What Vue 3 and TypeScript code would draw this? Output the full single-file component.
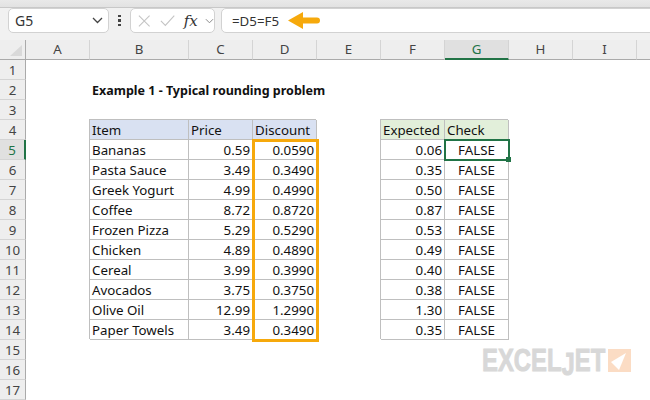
<script setup lang="ts">
type Cell = { text: string; cls: string };

// the tenth column runs off the window, its letter isn't visible
const columns = ["A", "B", "C", "D", "E", "F", "G", "H", "I", ""];

const items: [string, string, string, string][] = [
  ["Bananas", "0.59", "0.0590", "0.06"],
  ["Pasta Sauce", "3.49", "0.3490", "0.35"],
  ["Greek Yogurt", "4.99", "0.4990", "0.50"],
  ["Coffee", "8.72", "0.8720", "0.87"],
  ["Frozen Pizza", "5.29", "0.5290", "0.53"],
  ["Chicken", "4.89", "0.4890", "0.49"],
  ["Cereal", "3.99", "0.3990", "0.40"],
  ["Avocados", "3.75", "0.3750", "0.38"],
  ["Olive Oil", "12.99", "1.2990", "1.30"],
  ["Paper Towels", "3.49", "0.3490", "0.35"],
];

const blank = (): Cell => ({ text: "", cls: "" });

// every sheet row has ten cells, A to J
const buildRow = (n: number): Cell[] => {
  const row = columns.map(blank);
  if (n === 2) {
    row[1] = { text: "Example 1 - Typical rounding problem", cls: "title" };
  }
  if (n === 4) {
    row[1] = { text: "Item", cls: "boxed blue" };
    row[2] = { text: "Price", cls: "boxed blue" };
    row[3] = { text: "Discount", cls: "boxed blue" };
    row[5] = { text: "Expected", cls: "boxed green" };
    row[6] = { text: "Check", cls: "boxed green" };
  }
  if (n >= 5 && n <= 14) {
    const [name, price, discount, expected] = items[n - 5];
    row[1] = { text: name, cls: "boxed" };
    row[2] = { text: price, cls: "boxed num" };
    row[3] = { text: discount, cls: "boxed num" };
    row[5] = { text: expected, cls: "boxed num" };
    row[6] = { text: "FALSE", cls: "boxed mid" };
  }
  return row;
};

const rows = Array.from({ length: 17 }, (_, i) => ({ n: i + 1, cells: buildRow(i + 1) }));
</script>

<template>
  <div class="app">
    <div class="top-strip"></div>
    <div class="toolbar">
      <div class="name-box">
        <span>G5</span>
        <svg width="11" height="7" viewBox="0 0 11 7"><path d="M1 1l4.500 4.500L10 1" fill="none" stroke="#444" stroke-width="1.3" /></svg>
      </div>
      <div class="dots"><i></i><i></i><i></i></div>
      <div class="fx-box">
        <svg width="14" height="14" viewBox="0 0 14 14"><path d="M1 1l12 12M13 1L1 13" fill="none" stroke="#c4c4c4" stroke-width="1.2" /></svg>
        <svg class="check" width="17" height="13" viewBox="0 0 17 13"><path d="M1 7l5 5L16 1" fill="none" stroke="#c4c4c4" stroke-width="1.2" /></svg>
        <span class="fx">fx</span>
        <svg width="10" height="6" viewBox="0 0 10 6"><path d="M1 1l4 4 4-4" fill="none" stroke="#888" stroke-width="1.1" /></svg>
      </div>
      <div class="formula">
        <span>=D5=F5</span>
        <svg width="32" height="17" viewBox="0 0 32 17"><path d="M0 8.500L15 0v5.500h14a3 3 0 0 1 0 6H15V17z" fill="#f6a90c" /></svg>
      </div>
    </div>

    <div class="sheet">
      <div class="corner">
        <svg width="26" height="20" viewBox="0 0 26 20"><path d="M22 5v11H10z" fill="#d9d9d9" /></svg>
      </div>
      <div v-for="c in columns" :key="c" class="col-head" :class="{ active: c === 'G' }">{{ c }}</div>

      <template v-for="r in rows" :key="r.n">
        <div class="row-head" :class="{ active: r.n === 5 }">{{ r.n }}</div>
        <div v-for="(cell, i) in r.cells" :key="i" class="cell" :class="cell.cls">{{ cell.text }}</div>
      </template>

      <div class="orange-box"></div>
      <div class="selection"><span class="handle"></span></div>
    </div>

    <div class="logo">
      <span class="word">EXCEL<span class="j">J</span>ET</span>
      <span class="mark">
        <svg width="23" height="23" viewBox="0 0 23 23"><path d="M18 4L3 13l8 8z" fill="#fff" /></svg>
      </span>
    </div>
  </div>
</template>

<style scoped>
.app {
  position: relative;
  width: 650px;
  height: 400px;
  overflow: hidden;
  background: #fff;
  font-family: "Noto Sans", "Open Sans", sans-serif;
  font-size: 13.3px;
  color: #111;
}

.top-strip {
  height: 8px;
  background: linear-gradient(#e9e9e9, #e2e2e2);
  border-bottom: 1px solid #c8c8c8;
  box-sizing: border-box;
}

.toolbar {
  display: flex;
  align-items: stretch;
  height: 32px;
  padding: 0 0 7px 8px;
  box-sizing: border-box;
  background: #f1f1f1;
}

.name-box,
.fx-box,
.formula {
  display: flex;
  align-items: center;
  background: #fff;
  border: 1px solid #d2d2d2;
  box-sizing: border-box;
  border-radius: 5px;
}

.name-box {
  width: 101px;
  padding: 0 5px 0 6px;
  justify-content: space-between;
  color: #333;
  font-size: 14px;
}

.dots {
  display: flex;
  flex-direction: column;
  justify-content: center;
  gap: 2px;
  width: 21px;
  align-items: center;
}

.dots i {
  width: 2.500px;
  height: 2.500px;
  background: #444;
}

.fx-box {
  width: 85px;
  padding-left: 7px;
  margin-right: 6px;
}

.check {
  margin-left: 9px;
}

.fx {
  width: 24px;
  margin-left: 9px;
  font-family: "DejaVu Serif", "Liberation Serif", serif;
  font-style: italic;
  font-size: 15px;
  color: #333;
}

.formula {
  flex: 1;
  margin-right: -6px;
  padding-left: 10px;
  gap: 9px;
  font-size: 13.3px;
  color: #333;
}

.sheet {
  position: relative;
  display: grid;
  grid-template-columns: 26px 64px 99px repeat(8, 64px);
  grid-auto-rows: 20px;
  background: #fff;
}

.corner {
  height: 20px;
  background: #eee;
  border-bottom: 1px solid #aaa;
  border-right: 1px solid #aaa;
  box-sizing: border-box;
}

.col-head,
.row-head {
  display: flex;
  align-items: center;
  justify-content: center;
  background: #eee;
  box-sizing: border-box;
  color: #444;
}

.col-head {
  border-bottom: 1px solid #aaa;
  border-right: 1px solid #d4d4d4;
  padding-bottom: 1px;
}

.col-head.active {
  background: #e0e0e0;
  color: #217346;
  border-bottom: 2px solid #217346;
}

.row-head {
  border-bottom: 1px solid #d4d4d4;
  border-right: 1px solid #aaa;
}

.row-head.active {
  background: #e0e0e0;
  color: #217346;
  border-right: 2px solid #217346;
}

.cell {
  display: flex;
  align-items: center;
  padding: 0 3px 0 2px;
  box-sizing: border-box;
  white-space: nowrap;
  min-width: 0;
}

.title {
  font-weight: 700;
  font-size: 12.500px;
}

.boxed {
  box-shadow: -1px -1px 0 #bfbfbf, inset -1px -1px 0 #bfbfbf;
}

.blue {
  background: #d9e1f2;
}

.green {
  background: #e2efda;
}

.num {
  justify-content: flex-end;
}

.mid {
  justify-content: center;
}

/* absolute grid items take their grid area as containing block and don't push the cells away */
.orange-box {
  position: absolute;
  grid-column: 5 / 6;
  grid-row: 6 / span 10;
  inset: -1px -2px -2px -1px;
  border: 3px solid #f6a90c;
}

.selection {
  position: absolute;
  grid-column: 8 / 9;
  grid-row: 6 / 7;
  inset: -1px;
  border: 2px solid #217346;
}

.handle {
  position: absolute;
  right: -3px;
  bottom: -3px;
  width: 5px;
  height: 5px;
  background: #217346;
}

.logo {
  position: absolute;
  left: 482px;
  top: 349px;
  display: flex;
  gap: 3px;
}

.word {
  display: block;
  width: 123px;
  height: 23px;
  line-height: 23px;
  font-family: "Liberation Sans", sans-serif;
  font-weight: 700;
  font-size: 32px;
  color: #d8d8d8;
  -webkit-text-stroke: 1px #d8d8d8;
  transform: scaleX(0.745);
  transform-origin: left center;
  white-space: nowrap;
}

.j {
  display: inline-block;
  transform: translateY(4px);
}

.mark {
  display: block;
  width: 23px;
  height: 23px;
  background: #fbdcc4;
}
</style>

<style>
html,
body {
  margin: 0;
  overflow: hidden;
}
</style>
